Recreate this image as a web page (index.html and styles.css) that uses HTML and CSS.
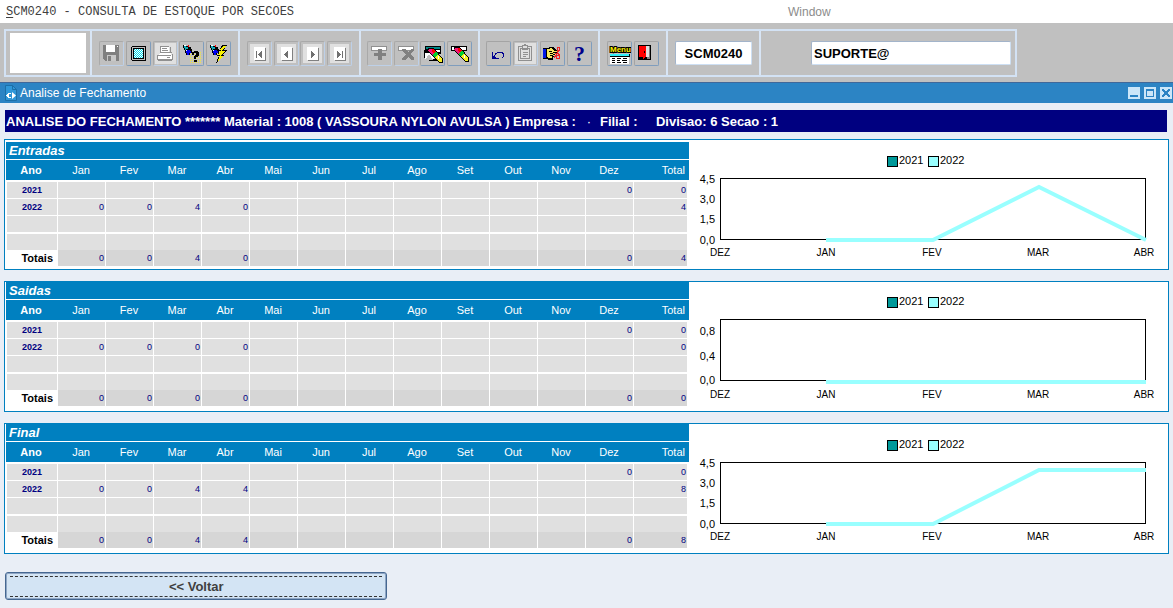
FILE: index.html
```html
<!DOCTYPE html>
<html lang="pt-BR">
<head>
<meta charset="utf-8">
<title>SCM0240 - Consulta de Estoque por Secoes</title>
<link rel="stylesheet" href="styles.css">
</head>
<body>
<header class="menubar">
  <a class="menu-item menu-main" href="#"><span class="accel">S</span>CM0240 - CONSULTA DE ESTOQUE POR SECOES</a>
  <a class="menu-item menu-window" href="#">Window</a>
</header>

<svg class="defs" aria-hidden="true">
  <defs>
    <pattern id="dither" width="2" height="2" patternUnits="userSpaceOnUse"><path fill="#fff" d="M0 0h2v2H0z"/><path fill="#00d8e8" d="M0 0h1v1H0zM1 1h1v1H1z"/></pattern>
    <pattern id="dots" width="2" height="2" patternUnits="userSpaceOnUse"><path fill="#f0e840" d="M0 0h1v1H0z"/></pattern>
    <symbol id="torch" viewBox="0 0 23 23"><path fill="#000" d="M3 3h3v1h2v1h3v2h1v4h-2v2H6v-2H5V8H4V6H3z"/><path fill="#10a8b8" d="M4 4h2v1h2v2H6v1H5V6H4z"/><path fill="#fff" d="M4 3h2v1H4zM6 8h2v1H6z"/><path fill="#0000f0" d="M7 8h3v1h1v2H9v2H7v-2H6z"/><path fill="#f00" d="M8 3h1v2H8z"/></symbol>
    <symbol id="brush" viewBox="0 0 23 23"><path fill="#000" d="M6 5h5l3 3 3 3 4 5v4h-4l-5-6-6-5z"/><path fill="#f01878" d="M7 6h3l3 3-3 3-4-4z"/><path fill="#ff0000" d="M10 6h1l3 3-2 2-2-2z"/><path fill="#00d030" d="m10 12 4-4 2 3-3 3z"/><path fill="#f8f020" d="m13 14 3-3 4 5v3h-3z"/><path fill="#fff" d="M16 13h1v3h-1z"/></symbol>
    <symbol id="page" viewBox="0 0 23 23"><path fill="#e0e0e0" d="M2 2h19v19H2z"/><path fill="#808080" d="M7 6h11v13H7z"/><path fill="#fff" d="M6 5h11v13H6z"/></symbol>
  </defs>
</svg>

<nav class="toolbar-area">
  <div class="toolbar">
    <div class="group group-logo"><div class="logo-box"></div></div>
    <div class="group group-file">
      <button class="tool off" aria-label="Salvar"><svg viewBox="0 0 23 23"><path fill="#808080" d="M3 3h16v16H5l-2-2z"/><path fill="#fff" d="M6 3h9v7H6z"/><path fill="#c8c8c8" d="M7 13h9v6H7z"/><path fill="#808080" d="M8 14h3v5H8z"/><path fill="#fff" d="M17 4h1v1h-1z"/></svg></button>
      <button class="tool" aria-label="Tela"><svg viewBox="0 0 23 23"><path fill="#000" d="M5 4h13l1 1v13l-1 1H5l-1-1V5z"/><path fill="#c0c0c0" d="M5 5h13v13H5z"/><path fill="#000" d="M6 6h11v11H6z"/><path fill="url(#dither)" d="M7 7h9v9H7z"/></svg></button>
      <button class="tool off" aria-label="Imprimir"><svg viewBox="0 0 23 23"><path fill="#e0e0e0" d="M1 1h21v21H1z"/><path fill="#fff" d="M6 4h9v7h2v2H4l2-2z"/><path fill="#909090" d="M7 4h8v1H7zM6 4h1v6H6zM8 6h5v1H8zM8 8h6v1H8zM6 10h12v1H6zM16 5h1v5h-1z"/><path fill="#fff" d="M4 13h14v5H4z"/><path fill="#909090" d="M3 13h1v5H3zM4 17h14v2H4zM18 12h1v6h-1zM4 13h13v1H4zM13 15h3v1h-3z"/></svg></button>
      <button class="tool" aria-label="Entrar consulta"><svg viewBox="0 0 23 23"><path fill="url(#dots)" d="M10 10h11v11H10z"/><use href="#torch"/><path fill="#000" d="M12 10h2V9h4v1h1v4h-1v1h-2v2h-2v-3h1v-1h1v-2h-2v2h-2zM14 18h3v2h-3z"/></svg></button>
      <button class="tool" aria-label="Executar consulta"><svg viewBox="0 0 23 23"><use href="#torch"/><path fill="#000" d="M15 3h5l-3 5h3l-4 5h2L9 21l3-7h-2l3-5h-1z"/><path fill="#f8f000" d="M16 4h3l-4 5h3l-4 5h2l-5 5 2-6h-2l3-5h-1z"/></svg></button>
    </div>
    <div class="group group-nav">
      <button class="tool off" aria-label="Primeiro"><svg viewBox="0 0 23 23"><use href="#page"/><path fill="#707070" d="M8 9h1v7H8zM14 9v7h-1v-1h-1v-1h-1v-1h-1v-1h1v-1h1v-1h1V9z"/></svg></button>
      <button class="tool off" aria-label="Anterior"><svg viewBox="0 0 23 23"><use href="#page"/><path fill="#707070" d="M13 9v7h-1v-1h-1v-1h-1v-1H9v-1h1v-1h1v-1h1V9z"/></svg></button>
      <button class="tool off" aria-label="Proximo"><svg viewBox="0 0 23 23"><use href="#page"/><path fill="#707070" d="M10 9v7h1v-1h1v-1h1v-1h1v-1h-1v-1h-1v-1h-1V9z"/></svg></button>
      <button class="tool off" aria-label="Ultimo"><svg viewBox="0 0 23 23"><use href="#page"/><path fill="#707070" d="M9 9v7h1v-1h1v-1h1v-1h1v-1h-1v-1h-1v-1h-1V9zM14 9h1v7h-1z"/></svg></button>
    </div>
    <div class="group group-record">
      <button class="tool off" aria-label="Incluir registro"><svg viewBox="0 0 23 23"><path fill="#909090" d="M3 4h16v5H3z"/><path fill="#fff" d="M4 5h14v3H4z"/><path fill="#808080" d="M10 7h4v4h4v3h-4v4h-4v-4H6v-3h4z"/></svg></button>
      <button class="tool off" aria-label="Excluir registro"><svg viewBox="0 0 23 23"><path fill="#909090" d="M3 4h16v5H3z"/><path fill="#fff" d="M4 5h14v3H4z"/><path fill="#808080" d="M7 7h3l3 3 3-3h3v2l-4 3 4 4v2h-3l-3-3-3 3H7v-2l4-4-4-3z"/></svg></button>
      <button class="tool" aria-label="Limpar bloco"><svg viewBox="0 0 23 23"><path fill="#000" d="M4 4h16v8H4zM8 17h8v2H8z"/><path fill="#008888" d="M5 5h14v2H5z"/><path fill="#fff" d="M6 8h13v2H6zM4 11h9v6H4z"/><path fill="#000" d="M3 8h8v2H4v6H3z"/><path fill="#c0c0c0" d="m4 18 4-6 4 6z"/><use href="#brush" x="1" y="1"/></svg></button>
      <button class="tool" aria-label="Limpar registro"><svg viewBox="0 0 23 23"><path fill="#000" d="M3 4h16v5H3z"/><path fill="#fff" d="M4 5h14v3H4z"/><use href="#brush"/></svg></button>
    </div>
    <div class="group group-edit">
      <button class="tool" aria-label="Desfazer"><svg viewBox="0 0 23 23"><path fill="none" stroke="#000090" d="M5.500 10v6.500H12M6 15.500l3-4 3-1.500h2.500l2 2v2.500l-2 2M7 13.500v2h2"/></svg></button>
      <button class="tool off" aria-label="Colar"><svg viewBox="0 0 23 23"><path fill="#e0e0e0" d="M1 1h21v21H1z"/><path fill="none" stroke="#909090" d="M8.500 4.500h-4v14h13v-14h-4M6.500 6.500h9v10h-9zM8.500 3.500h5v4h-5zM9 10.500h5M9 12.500h5M9 14.500h3"/><path fill="#909090" d="M10 2h2v2h-2z"/></svg></button>
      <button class="tool" aria-label="Recortar"><svg viewBox="0 0 23 23"><path fill="#000" d="M2 6h4l3-1h3l3 3h2v3h-3v2h-1v2h-1v3H7l-1-1H2z"/><path fill="#0018e8" d="M2 7h3v9H2z"/><path fill="#f8e860" d="M6 7h3V6h2l2 3h3v1h-4v1h2v1h-2v1h1v1h-2v2H7l-1-1z"/><path fill="#000" d="M8 9h3v1H8zM9 11h3v1H9zM9 13h3v1H9z"/><path fill="none" stroke="#f02020" d="M14 11.500h3l2 2M16 10.500l2-2M16.500 5.500h2v3h-2zM16.500 13.500h2v3h-3v-3zM13 15.500l3-3"/></svg></button>
      <button class="tool help" aria-label="Ajuda">?</button>
    </div>
    <div class="group group-menu">
      <button class="tool" aria-label="Menu"><svg viewBox="0 0 23 23"><text class="menu-word" x="2" y="10">Menu</text><path fill="#000" d="M2 12h20v3H2z"/><path fill="#30f0f8" d="M2 12h19v2H2z"/><path fill="#fff" d="M2 15h19v7H2z"/><path fill="#000" d="M4 16h3v1H4zM9 16h4v1H9zM15 16h4v1h-4zM4 18h3v1H4zM9 18h3v1H9zM14 18h5v1h-5zM4 20h3v1H4zM9 20h4v1H9zM15 20h4v1h-4z"/></svg></button>
      <button class="tool" aria-label="Sair"><svg viewBox="0 0 23 23"><path fill="#000" d="M3 3h13v15H3z"/><path fill="#808080" d="M12 4h3v13h-3z"/><path fill="#e0e0e0" d="M11 4h3v11h-3z"/><path fill="#f00" d="M4 4h7v11l-3 2V15H4z"/><path fill="#000" d="M9 9h1v2H9z"/></svg></button>
    </div>
    <div class="group group-code"><input class="field field-code" aria-label="Programa" value="SCM0240"></div>
    <div class="group group-user"><input class="field field-user" aria-label="Usuario" value="SUPORTE@"></div>
  </div>
</nav>

<section class="window">
  <div class="titlebar">
    <svg class="title-icon" viewBox="0 0 14 16"><path fill="#2f97d8" stroke="#1b6fa8" d="M1.500.5h7l4 4v11h-11z"/><path fill="none" stroke="#1b6fa8" d="M8.500.5v4h4"/><path fill="#fff" d="M3 9h1V8h3v1H5v3h2v1H4v-1H3v-1H2v-1h1zM8 7l4 3.500L8 14z"/></svg>
    <h1 class="title">Analise de Fechamento</h1>
    <div class="controls">
      <button class="ctl" aria-label="Minimizar"><svg viewBox="0 0 12 12"><path fill="#2b83c4" d="M2 8h8v2H2z"/></svg></button>
      <button class="ctl" aria-label="Maximizar"><svg viewBox="0 0 12 12"><path fill="#2b83c4" d="M2 2h8v8H2zM3 4v5h6V4z" fill-rule="evenodd"/></svg></button>
      <button class="ctl" aria-label="Fechar"><svg viewBox="0 0 12 12"><path fill="#2b83c4" d="M2 2h2v1h1v1h2V3h1V2h2v2H9v1H8v2h1v1h1v2H8V9H7V8H5v1H4v1H2V8h1V7h1V5H3V4H2z"/></svg></button>
    </div>
  </div>

  <main class="content">
    <div class="banner">
      <span>ANALISE DO FECHAMENTO ******* Material : 1008 ( VASSOURA NYLON AVULSA ) Empresa :</span>
      <span class="tick">·</span>
      <span class="filial">Filial :</span>
      <span>Divisao: 6 Secao : 1</span>
    </div>

    <section class="panel panel-first">
      <table class="grid">
        <caption>Entradas</caption>
        <colgroup><col class="c-year"><col span="12" class="c-month"><col class="c-total"></colgroup>
        <thead><tr><th>Ano</th><th>Jan</th><th>Fev</th><th>Mar</th><th>Abr</th><th>Mai</th><th>Jun</th><th>Jul</th><th>Ago</th><th>Set</th><th>Out</th><th>Nov</th><th>Dez</th><th>Total</th></tr></thead>
        <tbody>
          <tr><th>2021</th><td></td><td></td><td></td><td></td><td></td><td></td><td></td><td></td><td></td><td></td><td></td><td>0</td><td>0</td></tr>
          <tr><th>2022</th><td>0</td><td>0</td><td>4</td><td>0</td><td></td><td></td><td></td><td></td><td></td><td></td><td></td><td></td><td>4</td></tr>
          <tr><th></th><td></td><td></td><td></td><td></td><td></td><td></td><td></td><td></td><td></td><td></td><td></td><td></td><td></td></tr>
          <tr><th></th><td></td><td></td><td></td><td></td><td></td><td></td><td></td><td></td><td></td><td></td><td></td><td></td><td></td></tr>
        </tbody>
        <tfoot><tr><th>Totais</th><td>0</td><td>0</td><td>4</td><td>0</td><td></td><td></td><td></td><td></td><td></td><td></td><td></td><td>0</td><td>4</td></tr></tfoot>
      </table>
      <svg class="chart" viewBox="0 0 479 129" role="img" aria-label="Entradas por mes">
        <g class="frame"><rect class="k2021" x="198.500" y="16.500" width="10" height="10"/><rect class="k2022" x="239.500" y="16.500" width="10" height="10"/><rect class="plot" x="31.500" y="38.500" width="425" height="61"/></g>
        <text class="num" x="210" y="24">2021</text><text class="num" x="251" y="24">2022</text>
        <g class="num axis-y"><text x="26" y="43">4,5</text><text x="26" y="63">3,0</text><text x="26" y="83">1,5</text><text x="26" y="104">0,0</text></g>
        <polyline class="line" points="137,100 244,100 350,47 457,100"/>
        <g class="axis-x"><text x="31" y="116">DEZ</text><text x="137" y="116">JAN</text><text x="243" y="116">FEV</text><text x="349" y="116">MAR</text><text x="455" y="116">ABR</text></g>
      </svg>
    </section>

    <section class="panel">
      <table class="grid">
        <caption>Saidas</caption>
        <colgroup><col class="c-year"><col span="12" class="c-month"><col class="c-total"></colgroup>
        <thead><tr><th>Ano</th><th>Jan</th><th>Fev</th><th>Mar</th><th>Abr</th><th>Mai</th><th>Jun</th><th>Jul</th><th>Ago</th><th>Set</th><th>Out</th><th>Nov</th><th>Dez</th><th>Total</th></tr></thead>
        <tbody>
          <tr><th>2021</th><td></td><td></td><td></td><td></td><td></td><td></td><td></td><td></td><td></td><td></td><td></td><td>0</td><td>0</td></tr>
          <tr><th>2022</th><td>0</td><td>0</td><td>0</td><td>0</td><td></td><td></td><td></td><td></td><td></td><td></td><td></td><td></td><td>0</td></tr>
          <tr><th></th><td></td><td></td><td></td><td></td><td></td><td></td><td></td><td></td><td></td><td></td><td></td><td></td><td></td></tr>
          <tr><th></th><td></td><td></td><td></td><td></td><td></td><td></td><td></td><td></td><td></td><td></td><td></td><td></td><td></td></tr>
        </tbody>
        <tfoot><tr><th>Totais</th><td>0</td><td>0</td><td>0</td><td>0</td><td></td><td></td><td></td><td></td><td></td><td></td><td></td><td>0</td><td>0</td></tr></tfoot>
      </table>
      <svg class="chart" viewBox="0 0 479 129" role="img" aria-label="Saidas por mes">
        <g class="frame"><rect class="k2021" x="198.500" y="15.500" width="10" height="10"/><rect class="k2022" x="239.500" y="15.500" width="10" height="10"/><rect class="plot" x="31.500" y="37.500" width="425" height="61"/></g>
        <text class="num" x="210" y="23">2021</text><text class="num" x="251" y="23">2022</text>
        <g class="num axis-y"><text x="26" y="53">0,8</text><text x="26" y="78">0,4</text><text x="26" y="102">0,0</text></g>
        <polyline class="line" points="137,100 457,100"/>
        <g class="axis-x"><text x="31" y="116">DEZ</text><text x="137" y="116">JAN</text><text x="243" y="116">FEV</text><text x="349" y="116">MAR</text><text x="455" y="116">ABR</text></g>
      </svg>
    </section>

    <section class="panel">
      <table class="grid">
        <caption>Final</caption>
        <colgroup><col class="c-year"><col span="12" class="c-month"><col class="c-total"></colgroup>
        <thead><tr><th>Ano</th><th>Jan</th><th>Fev</th><th>Mar</th><th>Abr</th><th>Mai</th><th>Jun</th><th>Jul</th><th>Ago</th><th>Set</th><th>Out</th><th>Nov</th><th>Dez</th><th>Total</th></tr></thead>
        <tbody>
          <tr><th>2021</th><td></td><td></td><td></td><td></td><td></td><td></td><td></td><td></td><td></td><td></td><td></td><td>0</td><td>0</td></tr>
          <tr><th>2022</th><td>0</td><td>0</td><td>4</td><td>4</td><td></td><td></td><td></td><td></td><td></td><td></td><td></td><td></td><td>8</td></tr>
          <tr><th></th><td></td><td></td><td></td><td></td><td></td><td></td><td></td><td></td><td></td><td></td><td></td><td></td><td></td></tr>
          <tr><th></th><td></td><td></td><td></td><td></td><td></td><td></td><td></td><td></td><td></td><td></td><td></td><td></td><td></td></tr>
        </tbody>
        <tfoot><tr><th>Totais</th><td>0</td><td>0</td><td>4</td><td>4</td><td></td><td></td><td></td><td></td><td></td><td></td><td></td><td>0</td><td>8</td></tr></tfoot>
      </table>
      <svg class="chart" viewBox="0 0 479 129" role="img" aria-label="Final por mes">
        <g class="frame"><rect class="k2021" x="198.500" y="16.500" width="10" height="10"/><rect class="k2022" x="239.500" y="16.500" width="10" height="10"/><rect class="plot" x="31.500" y="38.500" width="425" height="61"/></g>
        <text class="num" x="210" y="24">2021</text><text class="num" x="251" y="24">2022</text>
        <g class="num axis-y"><text x="26" y="43">4,5</text><text x="26" y="63">3,0</text><text x="26" y="83">1,5</text><text x="26" y="104">0,0</text></g>
        <polyline class="line" points="137,100 244,100 350,46 457,46"/>
        <g class="axis-x"><text x="31" y="116">DEZ</text><text x="137" y="116">JAN</text><text x="243" y="116">FEV</text><text x="349" y="116">MAR</text><text x="455" y="116">ABR</text></g>
      </svg>
    </section>

    <button class="back"><span>&lt;&lt; Voltar</span></button>
  </main>
</section>
</body>
</html>
```
FILE: styles.css
```css
* { box-sizing: border-box; }
body {
  margin: 0;
  min-height: 100vh;
  background: #e9eef6;
  font-family: "Liberation Sans", Arial, sans-serif;
  font-size: 13px;
}
button, input { font-family: inherit; margin: 0; padding: 0; }
.defs { display: block; width: 0; height: 0; }

/* menu */
.menubar {
  display: grid;
  grid-template-columns: 2fr 1fr;
  align-items: center;
  height: 23px;
  padding-left: 6px;
  background: #fff;
}
.menu-item { color: #404040; text-decoration: none; white-space: nowrap; }
.menu-main { font: 12px "Liberation Mono", "Courier New", monospace; }
.menu-window { padding-left: 4px; color: #8c8c8c; font-size: 12px; }
.accel { text-decoration: underline; text-underline-offset: 2px; }

/* toolbar */
.toolbar-area { display: flex; padding: 6px 4px 5px; background: #c0c0c0; }
.toolbar { display: flex; height: 48px; border: 2px solid #d3e2f4; }
.group {
  display: flex;
  align-items: center;
  justify-content: space-between;
  padding: 0 7px;
  border-left: 2px solid #d8e5f5;
}
.group-logo { width: 84px; padding: 0 4px; border-left: 0; }
.logo-box { flex: 1; height: 40px; background: #fff; }
.group-file { width: 148px; }
.group-nav { width: 121px; }
.group-record { width: 119px; padding: 0 6px; }
.group-edit { width: 120px; padding: 0 6px; }
.group-menu { width: 68px; }
.group-code { width: 93px; }
.group-user { width: 256px; padding: 0 4px 0 50px; }
.tool {
  display: flex;
  align-items: center;
  justify-content: center;
  width: 25px;
  height: 25px;
  border: 1px solid;
  border-color: #a4a4a4 #7f9dbd #7f9dbd #a4a4a4;
  border-radius: 2px;
  background: #c0c0c0;
}
.tool.off { border-color: #a9a9a9 #bdd0e8 #bdd0e8 #a9a9a9; }
.tool svg { flex: none; width: 23px; height: 23px; shape-rendering: crispEdges; }
.help { color: #00008b; font: bold 22px/23px "Liberation Serif", serif; }
.menu-word {
  fill: #fff000;
  stroke: #000;
  stroke-width: 2px;
  paint-order: stroke;
  font: bold 8px "Liberation Sans", sans-serif;
}
.field {
  width: 100%;
  height: 24px;
  padding: 0 2px;
  border: 1px solid;
  border-color: #a3b4ca #cddff3 #cddff3 #a3b4ca;
  border-radius: 2px;
  background: #fff;
  color: #000;
  font-size: 13px;
  font-weight: bold;
}
.field-code { text-align: center; }

/* window */
.titlebar {
  display: flex;
  align-items: center;
  height: 21px;
  padding-left: 4px;
  border-top: 1px solid #40689a;
  background: #2c84c4;
}
.title-icon { width: 14px; height: 16px; }
.title { flex: 1; margin: 0 0 0 2px; color: #fff; font-size: 12px; font-weight: normal; }
.controls { display: flex; gap: 4px; padding-right: 1px; }
.ctl { display: flex; width: 12px; height: 12px; border: 0; background: #cbe6f9; }
.ctl svg { width: 12px; height: 12px; shape-rendering: crispEdges; }

.content { padding: 7px 4px 8px; }
.banner {
  display: flex;
  align-items: center;
  height: 22px;
  margin: 0 2px 7px 1px;
  padding-left: 1px;
  background: #000080;
  color: #fff;
  font-size: 13px;
  font-weight: bold;
  white-space: pre;
}
.tick { width: 24px; padding-left: 2px; text-align: center; font-weight: normal; }
.filial { width: 56px; }

.panel {
  display: flex;
  min-height: 131px;
  margin-bottom: 11px;
  padding-left: 1px;
  border: 1px solid #0080c0;
  background: #fff;
}
.panel-first .grid { margin-top: 2px; }
.grid {
  flex: 683 1 0;
  align-self: flex-start;
  width: 58%;
  table-layout: fixed;
  border-collapse: separate;
  border-spacing: 0;
}
.c-year { width: 52px; }
.c-month { width: 48px; }
.c-total { width: 55px; }
.grid caption {
  height: 18px;
  padding-left: 3px;
  border-bottom: 1px solid #fff;
  background: #0080c0;
  color: #fff;
  font-size: 13px;
  font-style: italic;
  font-weight: bold;
  line-height: 18px;
  text-align: left;
}
.grid th, .grid td { padding: 0; border: 0 solid #fff; }
.grid thead th {
  height: 22px;
  padding-right: 2px;
  border-bottom-width: 2px;
  background: #0080c0;
  color: #fff;
  font-size: 11px;
  font-weight: normal;
  line-height: 20px;
}
.grid thead th:first-child { font-weight: bold; }
.grid thead th:last-child { padding-right: 4px; text-align: right; }
.grid tbody th, .grid tbody td {
  height: 17px;
  border-width: 0 1px 1px 0;
  background: #e0e0e0;
  color: #000080;
  font-size: 9px;
  line-height: 16px;
}
.grid tbody tr:nth-child(3) > * { height: 18px; border-bottom-width: 2px; }
.grid tbody tr:last-child > * { height: 16px; border-bottom-width: 0; }
.grid tbody th { border-left-width: 1px; }
.grid td { text-align: right; padding-right: 1px; }
.grid tfoot td {
  height: 16px;
  border-right-width: 1px;
  background: #d6d6d6;
  color: #000080;
  font-size: 9px;
  line-height: 16px;
}
.grid tfoot th { padding-right: 5px; color: #000; font-size: 11px; line-height: 16px; text-align: right; }
.grid tr > td:last-child { border-right-width: 2px; }

.chart { display: block; flex: 479 1 0; min-width: 0; align-self: flex-start; }
.chart text { font-size: 10px; fill: #000; }
.chart .num, .chart .num text { font-size: 11px; }
.axis-y text { text-anchor: end; }
.axis-x text { text-anchor: middle; }
.frame rect { stroke: #000; shape-rendering: crispEdges; }
.plot { fill: none; }
.k2021 { fill: #009999; }
.k2022 { fill: #99ffff; }
.line { fill: none; stroke: #99ffff; stroke-width: 4; }

.back {
  display: block;
  width: calc(33% - 2px);
  height: 28px;
  margin: 18px 0 0 1px;
  padding: 2px 4px;
  border: 1px solid #456791;
  border-radius: 3px;
  box-shadow: inset 0 0 0 1px #8fa6c4;
  background: #d3e4f4;
  color: #404040;
  font-size: 13px;
  font-weight: bold;
}
.back span { display: block; border: 1px dashed #333; border-width: 1px 0; line-height: 19px; }
```
